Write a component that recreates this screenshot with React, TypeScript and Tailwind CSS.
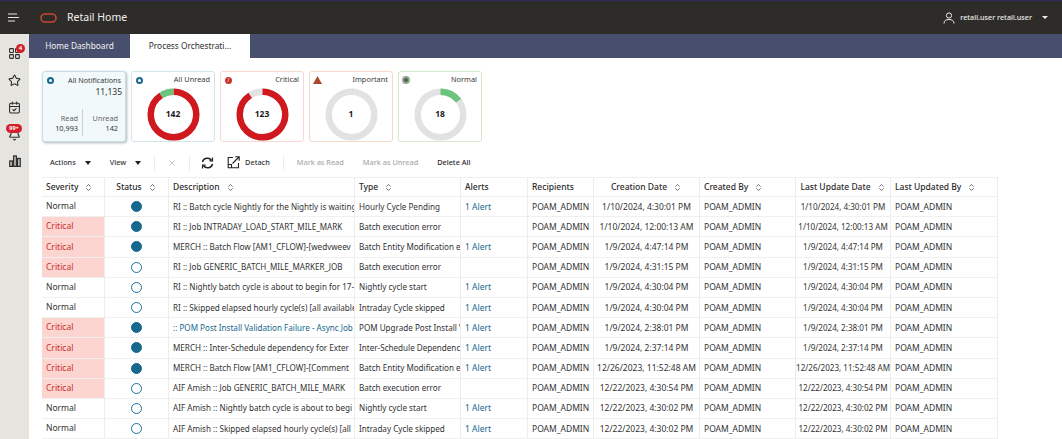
import { Bell, CalendarCheck, ChevronsUpDown, LayoutGrid, Star, X } from "lucide-react";

const columns = [
  { label: "Severity", sort: true, width: "w-[63px]" },
  { label: "Status", sort: true, width: "w-[64px]", center: true },
  { label: "Description", sort: true, width: "w-[186px]" },
  { label: "Type", sort: true, width: "w-[106px]" },
  { label: "Alerts", width: "w-[67px]" },
  { label: "Recipients", width: "w-[66px]" },
  { label: "Creation Date", sort: true, width: "w-[106px]", center: true },
  { label: "Created By", sort: true, width: "w-[96px]" },
  { label: "Last Update Date", sort: true, width: "w-[95px]", center: true },
  { label: "Last Updated By", sort: true, width: "w-[107px]" },
];

const rows = [
  ["Normal", true, "RI :: Batch cycle Nightly for the Nightly is waiting", "Hourly Cycle Pending", "1 Alert", "1/10/2024, 4:30:01 PM"],
  ["Critical", true, "RI :: Job INTRADAY_LOAD_START_MILE_MARK", "Batch execution error", "", "1/10/2024, 12:00:13 AM"],
  ["Critical", true, "MERCH :: Batch Flow [AM1_CFLOW]-[wedvweev", "Batch Entity Modification e", "1 Alert", "1/9/2024, 4:47:14 PM"],
  ["Critical", false, "RI :: Job GENERIC_BATCH_MILE_MARKER_JOB", "Batch execution error", "", "1/9/2024, 4:31:15 PM"],
  ["Normal", false, "RI :: Nightly batch cycle is about to begin for 17-I", "Nightly cycle start", "1 Alert", "1/9/2024, 4:30:04 PM"],
  ["Normal", false, "RI :: Skipped elapsed hourly cycle(s) [all available", "Intraday Cycle skipped", "1 Alert", "1/9/2024, 4:30:04 PM"],
  ["Critical", true, ":: POM Post Install Validation Failure - Async Job", "POM Upgrade Post Install V", "1 Alert", "1/9/2024, 2:38:01 PM"],
  ["Critical", true, "MERCH :: Inter-Schedule dependency for Exter", "Inter-Schedule Dependenc", "1 Alert", "1/9/2024, 2:37:14 PM"],
  ["Critical", true, "MERCH :: Batch Flow [AM1_CFLOW]-[Comment", "Batch Entity Modification e", "1 Alert", "12/26/2023, 11:52:48 AM"],
  ["Critical", false, "AIF Amish :: Job GENERIC_BATCH_MILE_MARK", "Batch execution error", "", "12/22/2023, 4:30:54 PM"],
  ["Normal", false, "AIF Amish :: Nightly batch cycle is about to begi", "Nightly cycle start", "1 Alert", "12/22/2023, 4:30:02 PM"],
  ["Normal", false, "AIF Amish :: Skipped elapsed hourly cycle(s) [all", "Intraday Cycle skipped", "1 Alert", "12/22/2023, 4:30:02 PM"],
  ["", false, "", "", "", ""],
] as const;

function Donut({ value, segments }: { value: string; segments: { color: string; from: number; to: number }[] }) {
  const r = 23.2;
  const c = 2 * Math.PI * r;
  return (
    <div className="relative mx-auto mt-[2px] size-[53px]">
      <svg viewBox="0 0 54 54" className="size-[53px] -rotate-90">
        <circle cx="27" cy="27" r={r} fill="none" stroke="#e2e2e2" strokeWidth="6.6" />
        {segments.map((s) => (
          <circle
            key={s.color}
            cx="27"
            cy="27"
            r={r}
            fill="none"
            stroke={s.color}
            strokeWidth="6.6"
            strokeDasharray={`${((s.to - s.from) / 360) * c} ${c}`}
            strokeDashoffset={(-s.from / 360) * c}
          />
        ))}
      </svg>
      <div className="absolute inset-0 flex items-center justify-center text-[8.5px] font-bold text-[#1c1c1c]">{value}</div>
    </div>
  );
}

function Card({ border, icon, title, children }: { border: string; icon: React.ReactNode; title: string; children: React.ReactNode }) {
  return (
    <div className={`h-[71px] w-[84px] shrink-0 rounded-[3px] border bg-white px-[3px] pt-[2px] ${border}`}>
      <div className="flex h-[12px] items-center justify-between pr-[1px] text-[7.4px] text-[#3a3a3a]">
        {icon}
        <span>{title}</span>
      </div>
      {children}
    </div>
  );
}

function SortIcon() {
  return <ChevronsUpDown className="ml-[6px] size-[9px] shrink-0 text-[#444]" strokeWidth={2} />;
}

function Sep() {
  return <div className="h-[16px] w-px bg-[#ececec]" />;
}

function Caret() {
  return <div className="ml-[9px] size-0 border-x-[3.5px] border-t-[4px] border-x-transparent border-t-[#222]" />;
}

export default function App() {
  return (
    <div className="flex h-[439px] w-[1062px] flex-col overflow-hidden bg-white font-['Noto_Sans',sans-serif]">
      <header className="flex h-[34px] shrink-0 items-center border-t border-t-[#2f2a5c] bg-[#2e2c28] text-white">
        <svg width="12" height="9" viewBox="0 0 12 9" className="ml-[8px]">
          <path d="M0 1h9M0 4.5h11M0 8h7" stroke="#e8e8e8" strokeWidth="1.2" />
        </svg>
        <svg width="17" height="10" viewBox="0 0 17 10" className="ml-[20px]">
          <rect x="1" y="1" width="15" height="8" rx="4" fill="none" stroke="#c74634" strokeWidth="1.6" />
        </svg>
        <span className="ml-[10px] text-[10.5px] text-[#f0f0f0]">Retail Home</span>
        <svg width="12" height="12" viewBox="0 0 12 12" className="ml-auto" fill="none" stroke="#ececec" strokeWidth="1">
          <circle cx="6" cy="3.5" r="2.6" />
          <path d="M1 11.5c0-3 2-4 5-4s5 1 5 4" />
        </svg>
        <span className="ml-[5px] text-[7.2px] font-medium text-[#eee]">retail.user retail.user</span>
        <div className="ml-[10px] mr-[14px] size-0 border-x-[3px] border-t-[3px] border-x-transparent border-t-[#eee]" />
      </header>

      <div className="flex min-h-0 flex-1">
        <aside className="flex w-[29px] shrink-0 flex-col items-center gap-[14px] bg-[#e6e4df] pt-[13px] text-[#2b2b2b]">
          <div className="relative size-[13px]">
            <LayoutGrid className="size-[13px]" strokeWidth={2} />
            <span className="absolute -right-[4px] -top-[3px] flex size-[9px] items-center justify-center rounded-full bg-[#d3202a] text-[6px] font-bold text-white">4</span>
          </div>
          <Star className="size-[13px]" strokeWidth={2} />
          <CalendarCheck className="size-[13px]" strokeWidth={2} />
          <div className="relative size-[13px]">
            <Bell className="size-[13px]" strokeWidth={2} />
            <span className="absolute -left-[2px] -top-[4px] flex h-[9px] w-[16px] items-center justify-center rounded-full bg-[#d3202a] text-[5.5px] font-bold text-white">99+</span>
          </div>
          <svg width="12" height="12" viewBox="0 0 12 12" fill="none" stroke="#2b2b2b" strokeWidth="1.3">
            <rect x="0.8" y="6" width="2.6" height="5.4" />
            <rect x="4.7" y="1" width="2.6" height="10.4" />
            <rect x="8.6" y="3.5" width="2.6" height="7.9" />
          </svg>
        </aside>

        <main className="min-w-0 flex-1">
          <div className="flex h-[24px] bg-[#484e6d] text-[8.3px]">
            <div className="flex w-[101px] items-center justify-center text-[#f2f2f2]">Home Dashboard</div>
            <div className="flex w-[120px] items-center justify-center bg-white text-[#2e2e2e]">Process Orchestrati...</div>
          </div>

          <div className="flex gap-[5px] pl-[13px] pt-[13px]">
            <div className="h-[71px] w-[84px] shrink-0 rounded-[3px] border border-[#c4dde6] bg-[#f2f9fb] px-[3px] pt-[2px] shadow-[1px_1px_3px_rgba(0,0,0,0.3)]">
              <div className="flex h-[12px] items-center justify-between pr-[1px] text-[7.2px] text-[#3a3a3a]">
                <div className="ml-[1px] size-[7px] rounded-full border-[2px] border-[#19688c]" />
                <span>All Notifications</span>
              </div>
              <div className="text-right text-[8.5px] leading-[12px] text-[#333]">11,135</div>
              <div className="mt-[11px] flex text-right text-[7.3px] leading-[9.5px]">
                <div className="h-[27px] w-[37px] border-r border-[#c9d3d6] pr-[4px] pt-[5px]">
                  <div className="text-[#666]">Read</div>
                  <div className="text-[#333]">10,993</div>
                </div>
                <div className="w-[35px] pt-[5px]">
                  <div className="text-[#666]">Unread</div>
                  <div className="text-[#333]">142</div>
                </div>
              </div>
            </div>

            <Card border="border-[#d2e5ea]" title="All Unread" icon={<div className="ml-[1px] size-[7px] rounded-full border-[2px] border-[#19688c]" />}>
              <Donut value="142" segments={[{ color: "#d0191f", from: 0, to: 325 }, { color: "#6cc47c", from: 325, to: 360 }]} />
            </Card>
            <Card border="border-[#f5d9d2]" title="Critical" icon={<div className="ml-[1px] flex size-[7px] items-center justify-center rounded-full bg-[#c8342c] text-[5px] leading-none text-white">/</div>}>
              <Donut value="123" segments={[{ color: "#d0191f", from: 0, to: 325 }]} />
            </Card>
            <Card border="border-[#f5d9c8]" title="Important" icon={<svg width="9" height="8" viewBox="0 0 9 8"><path d="M4.5 0 9 8H0z" fill="#a8482a" /></svg>}>
              <Donut value="1" segments={[{ color: "#f5d9c0", from: 0, to: 3 }]} />
            </Card>
            <Card border="border-[#d6e8ca]" title="Normal" icon={<div className="flex size-[8px] items-center justify-center rounded-full bg-[#9aa39a]"><div className="size-[4px] rounded-full bg-[#3f6b3a]" /></div>}>
              <Donut value="18" segments={[{ color: "#6cc47c", from: 0, to: 52 }]} />
            </Card>
          </div>

          <div className="ml-[21px] mt-[8px] flex h-[25px] items-center text-[7.3px] font-medium text-[#333]">
            <span>Actions</span>
            <Caret />
            <span className="ml-[19px]">View</span>
            <Caret />
            <div className="ml-[13px]"><Sep /></div>
            <X className="ml-[12px] size-[10px] text-[#aaa]" strokeWidth={1.5} />
            <div className="ml-[12px]"><Sep /></div>
            <svg width="13" height="12" viewBox="0 0 13 12" className="ml-[11px]" fill="none" stroke="#222" strokeWidth="1.5">
              <path d="M1.5 5A5 4.6 0 0 1 10.5 3.2M11.5 7A5 4.6 0 0 1 2.5 8.8" />
              <path d="M11.5 0.6v3.2H8.3M1.5 11.4V8.2h3.2" strokeWidth="1.2" />
            </svg>
            <svg width="13" height="13" viewBox="0 0 13 13" className="ml-[13px]" fill="none" stroke="#222" strokeWidth="1.1">
              <path d="M6 1.5H1.2v10.3h10.3V7" />
              <path d="M5.5 7.5 12 1M8.2 0.8h4v4" />
              <path d="M1.2 8.5h3.3v3.3" />
            </svg>
            <span className="ml-[5px]">Detach</span>
            <div className="ml-[13px]"><Sep /></div>
            <span className="ml-[13px] text-[#a8a8a8]">Mark as Read</span>
            <span className="ml-[19px] text-[#a8a8a8]">Mark as Unread</span>
            <span className="ml-[19px] text-[#2a2a2a]">Delete All</span>
          </div>

          <div className="ml-[13px] mt-[2px] w-[956px] border-t border-[#efefef] text-[8.5px] text-[#333]">
            <div className="flex h-[19px] border-b border-[#ededed] text-[8.5px] font-medium text-[#2a2a2a]">
              {columns.map((col) => (
                <div key={col.label} className={`flex shrink-0 items-center border-r border-[#ededed] px-[4px] ${col.width} ${col.center ? "justify-center" : ""}`}>
                  {col.label}
                  {col.sort && <SortIcon />}
                </div>
              ))}
            </div>
            {rows.map((row, i) => {
              const [severity, unread, desc, type, alert, date] = row;
              const critical = severity === "Critical" || i === 12;
              return (
                <div key={i} className="flex h-[20.2px] border-b border-[#f0f0f0]">
                  <div className={`flex w-[63px] shrink-0 items-center border-r border-[#ededed] px-[4px] ${critical ? "bg-[#fdd5d0] text-[#c8302c]" : ""}`}>{severity}</div>
                  <div className="flex w-[64px] shrink-0 items-center justify-center border-r border-[#ededed]">
                    {desc && <div className={`size-[11px] rounded-full border-[1.5px] ${unread ? "border-[#17688e] bg-[#17688e]" : "border-[#1a7299]"}`} />}
                  </div>
                  <div className={`w-[186px] shrink-0 self-center overflow-hidden whitespace-nowrap border-r border-[#ededed] px-[4px] text-[8.1px] leading-[20px] ${i === 6 ? "text-[#17688e]" : ""}`}>{desc || "\u00a0"}</div>
                  <div className="w-[106px] shrink-0 self-center overflow-hidden whitespace-nowrap border-r border-[#ededed] px-[4px] text-[8.1px] leading-[20px]">{type || "\u00a0"}</div>
                  <div className="w-[67px] shrink-0 self-center border-r border-[#ededed] px-[4px] leading-[20px] text-[#17688e]">{alert || "\u00a0"}</div>
                  <div className="w-[66px] shrink-0 self-center border-r border-[#ededed] px-[4px] leading-[20px]">{desc ? "POAM_ADMIN" : "\u00a0"}</div>
                  <div className="w-[106px] shrink-0 self-center overflow-hidden whitespace-nowrap border-r border-[#ededed] text-center leading-[20px]">{date || "\u00a0"}</div>
                  <div className="w-[96px] shrink-0 self-center border-r border-[#ededed] px-[4px] leading-[20px]">{desc ? "POAM_ADMIN" : "\u00a0"}</div>
                  <div className="w-[95px] shrink-0 self-center overflow-hidden whitespace-nowrap border-r border-[#ededed] text-center text-[8.1px] leading-[20px]">{date || "\u00a0"}</div>
                  <div className="w-[107px] shrink-0 self-center border-r border-[#ededed] px-[4px] leading-[20px]">{desc ? "POAM_ADMIN" : "\u00a0"}</div>
                </div>
              );
            })}
          </div>
        </main>
      </div>
    </div>
  );
}
